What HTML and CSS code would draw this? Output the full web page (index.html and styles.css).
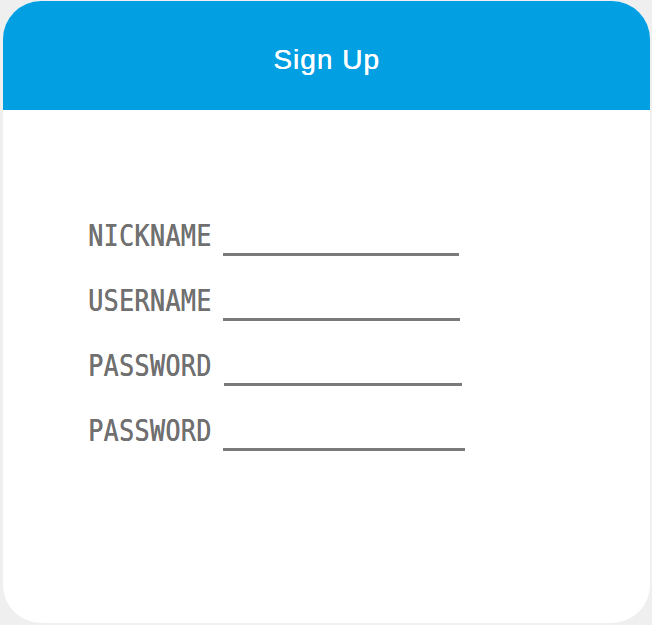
FILE: index.html
```html
<!DOCTYPE html>
<html lang="en">
  <head>
    <meta charset="UTF-8" />
    <meta name="viewport" content="width=device-width, initial-scale=1.0" />
    <title>Sign Up</title>
    <link rel="stylesheet" href="styles.css">
  </head>
  <body>
    <div class="card">
      <div class="header">
        <h1>Sign Up</h1>
      </div>

      <form class="form">
        <div class="row">
          <label for="nickname">NICKNAME</label>
          <input type="text" id="nickname" class="line" />
        </div>
        <div class="row">
          <label for="username">USERNAME</label>
          <input type="text" id="username" class="line line-2" />
        </div>
        <div class="row">
          <label for="password">PASSWORD</label>
          <input type="password" id="password" class="line line-3" />
        </div>
        <div class="row">
          <label for="password2">PASSWORD</label>
          <input type="password" id="password2" class="line line-4" />
        </div>
      </form>
    </div>
  </body>
</html>
```

FILE: styles.css
```css
* {
  box-sizing: border-box;
}

body {
  margin: 0;
  padding: 1px 2px 2px 3px;
  background-color: #efefef;
  font-family: "DejaVu Sans Mono", monospace;
}

.card {
  width: 647px;
  height: 622px;
  background-color: #fff;
  border-radius: 38px;
  overflow: hidden;
}

.header {
  height: 109px;
  background-color: #029fe3;
  padding-top: 43px;
  text-align: center;
}

.header h1 {
  margin: 0;
  font-family: "Liberation Sans", Arial, sans-serif;
  font-weight: 400;
  font-size: 28px;
  line-height: 32px;
  letter-spacing: 1px;
  color: #fff;
  text-shadow: 0.4px 0 0 #fff;
}

.form {
  padding: 81px 0 0 85px;
}

.row {
  display: flex;
  align-items: flex-end;
  height: 65px;
}

.row label {
  width: 135px;
  margin-bottom: 6px;
  font-size: 25px;
  line-height: 25px;
  letter-spacing: 0.4px;
  color: #707070;
  text-shadow: 0.4px 0 0 #707070;
  transform: scaleY(1.18);
  transform-origin: 0 21px;
}

.line {
  width: 236px;
  height: 3px;
  padding: 0;
  border: 0;
  background-color: #7a7a7a;
  outline: none;
}

.line-2 {
  width: 237px;
}

.line-3 {
  width: 238px;
  margin-left: 1px;
}

.line-4 {
  width: 242px;
}
```
